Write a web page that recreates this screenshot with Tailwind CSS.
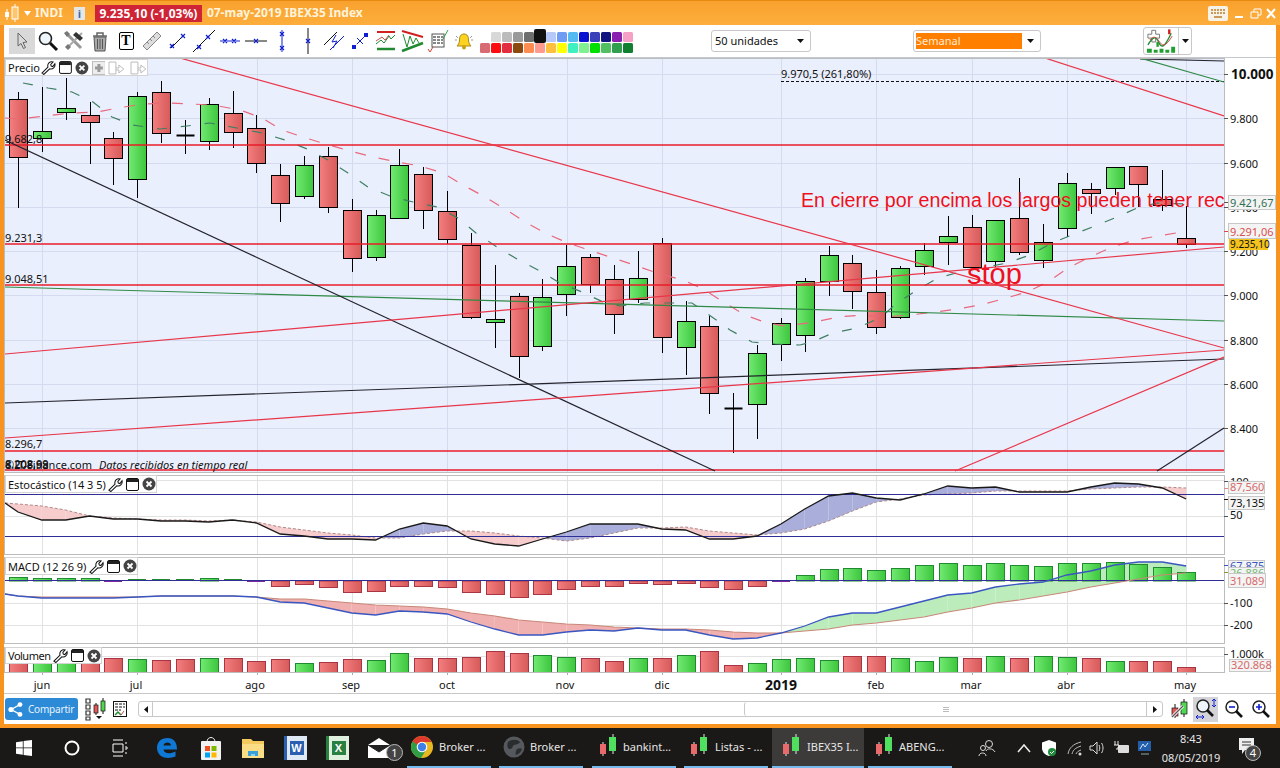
<!DOCTYPE html>
<html lang="es">
<head>
<meta charset="UTF-8" />
<title>IBEX35 Index</title>
<script src="https://cdn.jsdelivr.net/npm/@tailwindcss/browser@4"></script>
</head>
<body class="bg-black">
<div class="w-[1280px] h-[768px] flex flex-col overflow-hidden font-['Noto_Sans',sans-serif]">

  <!-- trading window -->
  <div class="h-[728px] flex flex-col bg-white border-x-4 border-b-4 border-[#f7931e]">

    <!-- title bar -->
    <div class="h-[25px] -mx-1 flex items-center bg-gradient-to-b from-[#f9a12e] to-[#fdae3c] border-t border-[#e88a10] text-[12px] font-bold">
      <svg class="ml-1 w-[17px] h-[20px]" viewBox="0 0 17 20"><path d="M3 6v11M11 1v18" stroke="#fff" fill="none"/><rect x="1" y="9" width="4" height="5" fill="#fff"/><rect x="8" y="4" width="6" height="12" fill="#ffc56e" stroke="#fff"/></svg>
      <svg class="ml-[3px] w-[7px] h-[5px]" viewBox="0 0 7 5"><path d="M0 0h7L3.5 5z" fill="#fff"/></svg>
      <span class="ml-[4px] text-[#fff3dc]">INDI</span>
      <span class="ml-[11px] w-[11px] h-[13px] bg-[#e6e6e6] text-[#3b6db0] text-[11px] leading-[13px] text-center">i</span>
      <span class="ml-[10px] w-[107px] h-[17px] leading-[17px] text-center bg-[#cf2436] text-[#fff]">9.235,10 (-1,03%)</span>
      <span class="ml-[5px] text-[#fff3dc] whitespace-nowrap">07-may-2019 IBEX35 Index</span>
      <div class="ml-auto flex items-center">
        <svg class="w-[20px] h-[15px]" viewBox="0 0 20 15"><rect width="20" height="15" rx="2" fill="#f7f2e8"/><path d="M3 4h14M3 7h14" stroke="#c99a5a" stroke-width="2" stroke-dasharray="2 1"/><path d="M6 11h8" stroke="#c99a5a" stroke-width="2"/></svg>
        <svg class="ml-[6px] w-[42px] h-[15px]" viewBox="0 0 42 15"><path d="M1 11h8" stroke="#fff" stroke-width="2"/><path d="M17 6h7v6h-7zM20 6V3h7v6h-3" stroke="#fff" fill="none"/><path d="M33 3l8 9M41 3l-8 9" stroke="#fff" stroke-width="2"/></svg>
        <span class="w-[4px]"></span>
      </div>
    </div>

    <!-- drawing toolbar -->
    <div class="h-[33px] flex items-center pl-[5px] border-b border-[#c4c8d0]">
      <span class="w-[26px] h-[26px] flex items-center justify-center bg-[#d9d9d9]"><svg class="w-[20px] h-[20px]" viewBox="0 0 20 20"><path d="M6 2l9 9-4 .5 2.5 5-2 1-2.5-5L6 15z" fill="#d9d9d9" stroke="#666"/></svg></span>
      <span class="w-[26px] h-[26px] flex items-center justify-center"><svg class="w-[22px] h-[22px]" viewBox="0 0 22 22"><circle cx="8.5" cy="8.5" r="6" fill="#eef5fb" stroke="#222" stroke-width="1.6"/><path d="M13 13l7 7" stroke="#111" stroke-width="3"/></svg></span>
      <span class="w-[26px] h-[26px] flex items-center justify-center"><svg class="w-[22px] h-[22px]" viewBox="0 0 22 22"><path d="M3 3l15 15" stroke="#999" stroke-width="3"/><path d="M19 3l-13 13" stroke="#aaa" stroke-width="2"/><path d="M13 2l7 6-3 3-7-6z" fill="#333"/><path d="M2 17l3 3 3-3-3-3z" fill="#777"/><path d="M1 3l3-2 3 3-3 3z" fill="#777"/></svg></span>
      <span class="w-[26px] h-[26px] flex items-center justify-center"><svg class="w-[18px] h-[21px]" viewBox="0 0 18 21"><path d="M2 5h14M6 5V2h6v3" stroke="#666" stroke-width="1.5" fill="none"/><path d="M3 6h12l-1 14H4z" fill="#aaa" stroke="#555"/><path d="M6.5 8v10M9 8v10M11.5 8v10" stroke="#555"/></svg></span>
      <span class="w-[26px] h-[26px] flex items-center justify-center"><span class="w-[15px] h-[18px] border border-black rounded-[2px] bg-white text-black text-[14px] leading-[15px] font-bold text-center font-['Liberation_Serif',serif]">T</span></span>
      <span class="w-[26px] h-[26px] flex items-center justify-center"><svg class="w-[22px] h-[22px]" viewBox="0 0 22 22"><path d="M2 16L16 2l4 4L6 20z" fill="#ddd" stroke="#888"/><path d="M6 12l2 2M9 9l2 2M12 6l2 2" stroke="#888"/></svg></span>
      <span class="w-[26px] h-[26px] flex items-center justify-center"><svg class="w-[20px] h-[20px]" viewBox="0 0 20 20"><path d="M3 17L17 3" stroke="#111"/><path d="M2 13l4 4M2 17l4-4M13 3l4 4M13 7l4-4" stroke="#1020d0" stroke-width="1.2"/></svg></span>
      <span class="w-[26px] h-[26px] flex items-center justify-center"><svg class="w-[24px] h-[24px]" viewBox="0 0 24 24"><path d="M1 23L23 1" stroke="#111"/><path d="M5 16l4 4M5 20l4-4M14 6l4 4M14 10l4-4" stroke="#1020d0" stroke-width="1.2"/></svg></span>
      <span class="w-[26px] h-[26px] flex items-center justify-center"><svg class="w-[20px] h-[10px]" viewBox="0 0 20 10"><path d="M0 5h20" stroke="#1020d0"/><path d="M3 3l4 4M3 7l4-4M12 3l4 4M12 7l4-4" stroke="#1020d0" stroke-width="1.2"/></svg></span>
      <span class="w-[26px] h-[26px] flex items-center justify-center"><svg class="w-[22px] h-[10px]" viewBox="0 0 22 10"><path d="M0 5h22" stroke="#111"/><path d="M9 3l4 4M9 7l4-4" stroke="#1020d0" stroke-width="1.2"/></svg></span>
      <span class="w-[26px] h-[26px] flex items-center justify-center"><svg class="w-[10px] h-[22px]" viewBox="0 0 10 22"><path d="M5 0v22" stroke="#1020d0"/><path d="M3 2l4 4M3 6l4-4M3 16l4 4M3 20l4-4" stroke="#1020d0" stroke-width="1.2"/></svg></span>
      <span class="w-[26px] h-[26px] flex items-center justify-center"><svg class="w-[10px] h-[26px]" viewBox="0 0 10 26"><path d="M5 0v26" stroke="#111"/><path d="M3 11l4 4M3 15l4-4" stroke="#1020d0" stroke-width="1.2"/></svg></span>
      <span class="w-[26px] h-[26px] flex items-center justify-center"><svg class="w-[22px] h-[22px]" viewBox="0 0 22 22"><path d="M1 15L14 2" stroke="#111"/><path d="M7 20L21 6" stroke="#1020d0"/><path d="M13 5l-4 7 5-1-4 7" stroke="#1020d0" fill="none"/></svg></span>
      <span class="w-[26px] h-[26px] flex items-center justify-center"><svg class="w-[20px] h-[20px]" viewBox="0 0 20 20"><path d="M4 16L16 4" stroke="#1020d0" stroke-dasharray="2 2"/><rect x="2" y="14" width="4" height="4" fill="#1020d0"/><rect x="14" y="2" width="4" height="4" fill="#1020d0"/><path d="M7 7l6 6M7 13l6-6" stroke="#1020d0"/></svg></span>
      <span class="w-[26px] h-[26px] flex items-center justify-center"><svg class="w-[24px] h-[24px]" viewBox="0 0 24 24"><path d="M3 3h18" stroke="#d02020" stroke-width="2"/><path d="M3 20h18" stroke="#208a30" stroke-width="2.5"/><path d="M2 15l5-4 3 3 5-7 2 3 4-4" stroke="#208a30" fill="none"/><path d="M2 12l6-4 3 3 4-5" stroke="#d05050" fill="none"/></svg></span>
      <span class="w-[26px] h-[26px] flex items-center justify-center"><svg class="w-[25px] h-[25px]" viewBox="0 0 25 25"><path d="M2 2l21 6" stroke="#d02020" stroke-width="2"/><path d="M2 22l21-8" stroke="#208a30" stroke-width="2.5"/><path d="M3 5l4 13 3-11 3 8 3-6 3 5" stroke="#208a30" fill="none"/></svg></span>
      <span class="w-[26px] h-[26px] flex items-center justify-center"><svg class="w-[22px] h-[24px]" viewBox="0 0 22 24"><rect x="5" y="5" width="12" height="13" fill="#fff" stroke="#555"/><path d="M6 8h10M6 11h10M6 14h10" stroke="#111" stroke-dasharray="3 1"/><path d="M1 20l2 3 3-5" stroke="#d04030" fill="none"/><path d="M16 10l5-9" stroke="#30a040"/></svg></span>
      <span class="w-[26px] h-[26px] flex items-center justify-center"><svg class="w-[20px] h-[20px]" viewBox="0 0 20 20"><path d="M10 3c-3.500 0-4.500 3-4.500 6S4 14 3 15h14c-1-1-2.500-3-2.500-6s-1-6-4.500-6z" fill="#ffd21f" stroke="#a88a10"/><circle cx="10" cy="16.500" r="2" fill="#c9a010"/><path d="M2 5l2 2M18 5l-2 2M1 9h2M19 9h-2" stroke="#999"/></svg></span>

      <svg class="ml-[3px] w-[154px] h-[25px]" viewBox="0 0 154 25">
        <g transform="translate(11 3)">
          <rect width="10" height="10" rx="1.500" fill="#d8d8d8"/><rect x="11" width="10" height="10" rx="1.500" fill="#bcbcbc"/><rect x="22" width="10" height="10" rx="1.500" fill="#9a9a9a"/><rect x="33" width="10" height="10" rx="1.500" fill="#6e6e6e"/>
          <rect x="55" width="10" height="10" rx="1.500" fill="#b5c8f7"/><rect x="66" width="10" height="10" rx="1.500" fill="#6f9cf3"/><rect x="77" width="10" height="10" rx="1.500" fill="#56baf2"/><rect x="88" width="10" height="10" rx="1.500" fill="#0a14d0"/><rect x="99" width="10" height="10" rx="1.500" fill="#3a40b8"/><rect x="110" width="10" height="10" rx="1.500" fill="#101480"/><rect x="121" width="10" height="10" rx="1.500" fill="#8a20b0"/><rect x="132" width="10" height="10" rx="1.500" fill="#f6a0c8"/>
        </g>
        <g transform="translate(0 14)">
          <rect width="10" height="10" rx="1.500" fill="#d86a72"/><rect x="11" width="10" height="10" rx="1.500" fill="#ff0c10"/><rect x="22" width="10" height="10" rx="1.500" fill="#e03040"/><rect x="33" width="10" height="10" rx="1.500" fill="#8a4a10"/><rect x="44" width="10" height="10" rx="1.500" fill="#ff8c50"/><rect x="55" width="10" height="10" rx="1.500" fill="#ff9a90"/><rect x="66" width="10" height="10" rx="1.500" fill="#ffc040"/><rect x="77" width="10" height="10" rx="1.500" fill="#ffff00"/><rect x="88" width="10" height="10" rx="1.500" fill="#40f0c0"/><rect x="99" width="10" height="10" rx="1.500" fill="#80f090"/><rect x="110" width="10" height="10" rx="1.500" fill="#00e000"/><rect x="121" width="10" height="10" rx="1.500" fill="#50c060"/><rect x="132" width="10" height="10" rx="1.500" fill="#30a050"/><rect x="143" width="10" height="10" rx="1.500" fill="#108030"/>
        </g>
        <rect x="54" y="0" width="12" height="14" rx="2" fill="#111"/>
      </svg>

      <div class="ml-[77px] w-[100px] h-[22px] flex items-center justify-between pl-[3px] pr-[6px] border border-[#c8c8c8] rounded-[3px] text-[11px] text-[#111]">
        <span>50 unidades</span>
        <svg class="w-[7px] h-[4px]" viewBox="0 0 7 4"><path d="M0 0h7L3.500 4z" fill="#111"/></svg>
      </div>
      <div class="ml-[102px] w-[128px] h-[22px] flex items-center justify-between pl-[2px] pr-[6px] border border-[#c8c8c8] rounded-[3px] text-[11px]">
        <span class="w-[106px] h-[16px] leading-[16px] bg-[#ff7f00] text-[#ffe9d0]">Semanal</span>
        <svg class="w-[7px] h-[4px]" viewBox="0 0 7 4"><path d="M0 0h7L3.500 4z" fill="#111"/></svg>
      </div>
      <div class="ml-[102px] w-[49px] h-[28px] flex items-center border border-[#c8c8c8] rounded-[3px]">
        <svg class="ml-[1px] w-[34px] h-[26px] border-r border-[#d0d0d0]" viewBox="0 0 34 26"><path d="M3 6h4V2h4v4h4v4h-4v4H7v-4H3z" fill="#fff" stroke="#777"/><path d="M3 17c5-8 8-10 11-3s6 6 13-9" stroke="#208a30" stroke-width="1.400" fill="none"/><path d="M5 12c7-9 10 6 14 5s5-3 9-9" stroke="#d04040" fill="none"/><path d="M25 1v5" stroke="#d02020" stroke-width="2.500"/><path d="M13 14v5" stroke="#20a030" stroke-width="2.500"/><path d="M2 25v-4h5v4zM9 25v-3h4v3zM15 25v-4h4v4zM21 25v-3h4v3zM27 25v-6h4v6z" fill="#20a030"/></svg>
        <svg class="ml-[3px] w-[7px] h-[4px]" viewBox="0 0 7 4"><path d="M0 0h7L3.500 4z" fill="#111"/></svg>
      </div>
    </div>

    <!-- price pane -->
    <div class="relative h-[417px]">
      <svg id="pricePane" class="block overflow-visible" width="1272" height="417" viewBox="4 58 1272 417"></svg>
      <div class="absolute left-px top-px h-[17px] w-[143px] flex items-center gap-[3px] pl-[2px] bg-white border border-[#d4d4d4] text-[11px] leading-none text-[#111]">
        <span class="w-[30px]">Precio</span>
        <svg class="w-[15px] h-[15px]" viewBox="0 0 16 16"><path d="M1 14l6.500-6.500C6.500 4 9.500 1 13 2l-2.500 2.800.5 1.700 1.700.5L15 4c.8 3.800-2.400 6.400-5.600 5.400L3 15.500z" fill="#fff" stroke="#111" stroke-width="1.100"/></svg>
        <svg class="w-[13px] h-[13px]" viewBox="0 0 13 13"><rect x=".5" y=".5" width="12" height="12" rx="1.500" fill="#fff" stroke="#111"/><rect x="1" y="1" width="11" height="3" fill="#222"/></svg>
        <svg class="w-[14px] h-[14px]" viewBox="0 0 14 14"><circle cx="7" cy="7" r="6.500" fill="#444"/><path d="M4.500 4.500l5 5M9.500 4.500l-5 5" stroke="#fff" stroke-width="1.800"/></svg>
        <svg class="w-[14px] h-[14px]" viewBox="0 0 14 14"><rect x=".5" y=".5" width="13" height="13" fill="#eee" stroke="#bbb"/><path d="M7 3v8M3 7h8" stroke="#999" stroke-width="3"/></svg>
        <svg class="w-[17px] h-[14px]" viewBox="0 0 17 14"><path d="M1 1h7v12H1zM8 7h3V4l5 4-5 4v-3H8" fill="#fff" stroke="#bbb"/></svg>
        <svg class="ml-[2px] w-[17px] h-[14px]" viewBox="0 0 17 14"><path d="M1 1h7v12H1zM8 7h3V4l5 4-5 4v-3H8" fill="#fff" stroke="#bbb"/></svg>
      </div>
    </div>

    <!-- stochastic pane -->
    <div class="relative h-[82px]">
      <svg id="stochPane" class="block overflow-visible" width="1272" height="82" viewBox="4 475 1272 82"></svg>
      <div class="absolute left-px top-0 h-[18px] w-[152px] flex items-center gap-[3px] pl-[2px] bg-white border border-[#d4d4d4] text-[11px] leading-none text-[#111]">
        <span class="w-[97px] whitespace-nowrap">Estocástico (14 3 5)</span>
        <svg class="w-[15px] h-[15px]" viewBox="0 0 16 16"><path d="M1 14l6.500-6.500C6.500 4 9.500 1 13 2l-2.500 2.800.5 1.700 1.700.5L15 4c.8 3.800-2.400 6.400-5.600 5.400L3 15.500z" fill="#fff" stroke="#111" stroke-width="1.100"/></svg>
        <svg class="w-[13px] h-[13px]" viewBox="0 0 13 13"><rect x=".5" y=".5" width="12" height="12" rx="1.500" fill="#fff" stroke="#111"/><rect x="1" y="1" width="11" height="3" fill="#222"/></svg>
        <svg class="w-[14px] h-[14px]" viewBox="0 0 14 14"><circle cx="7" cy="7" r="6.500" fill="#444"/><path d="M4.500 4.500l5 5M9.500 4.500l-5 5" stroke="#fff" stroke-width="1.800"/></svg>
      </div>
    </div>

    <!-- macd pane -->
    <div class="relative h-[90px]">
      <svg id="macdPane" class="block overflow-visible" width="1272" height="90" viewBox="4 557 1272 90"></svg>
      <div class="absolute left-px top-0 h-[18px] w-[133px] flex items-center gap-[3px] pl-[2px] bg-white border border-[#d4d4d4] text-[11px] leading-none text-[#111]">
        <span class="w-[78px] whitespace-nowrap">MACD (12 26 9)</span>
        <svg class="w-[15px] h-[15px]" viewBox="0 0 16 16"><path d="M1 14l6.500-6.500C6.500 4 9.500 1 13 2l-2.500 2.800.5 1.700 1.700.5L15 4c.8 3.800-2.400 6.400-5.600 5.400L3 15.500z" fill="#fff" stroke="#111" stroke-width="1.100"/></svg>
        <svg class="w-[13px] h-[13px]" viewBox="0 0 13 13"><rect x=".5" y=".5" width="12" height="12" rx="1.500" fill="#fff" stroke="#111"/><rect x="1" y="1" width="11" height="3" fill="#222"/></svg>
        <svg class="w-[14px] h-[14px]" viewBox="0 0 14 14"><circle cx="7" cy="7" r="6.500" fill="#444"/><path d="M4.500 4.500l5 5M9.500 4.500l-5 5" stroke="#fff" stroke-width="1.800"/></svg>
      </div>
    </div>

    <!-- volume pane -->
    <div class="relative h-[25px]">
      <svg id="volPane" class="block overflow-visible" width="1272" height="25" viewBox="4 647 1272 25"></svg>
      <div class="absolute left-px top-0 h-[17px] w-[97px] flex items-center gap-[3px] pl-[2px] bg-white border border-[#d4d4d4] text-[11px] leading-none text-[#111]">
        <span class="w-[42px] whitespace-nowrap tracking-[-0.5px]">Volumen</span>
        <svg class="w-[15px] h-[15px]" viewBox="0 0 16 16"><path d="M1 14l6.500-6.500C6.500 4 9.500 1 13 2l-2.500 2.800.5 1.700 1.700.5L15 4c.8 3.800-2.400 6.400-5.600 5.400L3 15.500z" fill="#fff" stroke="#111" stroke-width="1.100"/></svg>
        <svg class="w-[13px] h-[13px]" viewBox="0 0 13 13"><rect x=".5" y=".5" width="12" height="12" rx="1.500" fill="#fff" stroke="#111"/><rect x="1" y="1" width="11" height="3" fill="#222"/></svg>
        <svg class="w-[14px] h-[14px]" viewBox="0 0 14 14"><circle cx="7" cy="7" r="6.500" fill="#444"/><path d="M4.500 4.500l5 5M9.500 4.500l-5 5" stroke="#fff" stroke-width="1.800"/></svg>
      </div>
    </div>

    <!-- months -->
    <div class="h-[22px] shrink-0 border-b border-[#c8c8c8]">
      <svg id="datePane" class="block" width="1272" height="21" viewBox="4 672 1272 21"></svg>
    </div>

    <!-- bottom toolbar -->
    <div class="flex-1 flex items-center pl-px">
      <button class="w-[73px] h-[22px] flex items-center gap-[5px] pl-[3px] rounded-[3px] bg-[#2c8ad6] text-[10px] tracking-[-0.2px] text-[#e8f4ff] whitespace-nowrap">
        <svg class="w-[15px] h-[15px] shrink-0" viewBox="0 0 15 15"><circle cx="3" cy="7.500" r="2.600" fill="#fff"/><circle cx="12" cy="2.600" r="2.400" fill="#fff"/><circle cx="12" cy="12.400" r="2.400" fill="#fff"/><path d="M3 7.500L12 2.600M3 7.500l9 4.900" stroke="#fff" stroke-width="1.300"/></svg>
        Compartir
      </button>
      <svg class="ml-[5px] w-[24px] h-[24px]" viewBox="0 0 24 24"><path d="M3 2h4v4H3zM3 8h4v4H3zM3 14h4v4H3zM3 20h4v3H3z" fill="none" stroke="#333" stroke-width="1.200"/><path d="M13 6v12" stroke="#111"/><rect x="11" y="8" width="4" height="8" fill="#e05a5a" stroke="#111" stroke-width=".7"/><path d="M20 1v16" stroke="#111"/><rect x="18" y="4" width="4" height="10" fill="#4fd84f" stroke="#111" stroke-width=".7"/><path d="M13 19h6l-3 3z" fill="#111"/></svg>
      <svg class="ml-[6px] w-[14px] h-[16px]" viewBox="0 0 14 16"><rect x=".5" y=".5" width="13" height="15" fill="#fff" stroke="#111"/><path d="M2 3h10M2 6h10M2 9h6" stroke="#111" stroke-dasharray="3 1"/><path d="M2 14l3-3 3 3" stroke="#208a30" fill="none" stroke-width="1.500"/><path d="M8 14l3-4" stroke="#d04040"/></svg>
      <div class="ml-[11px] w-[1025px] h-[16px] flex border border-[#c8c8c8] rounded-[3px]">
        <span class="w-[14px] flex items-center justify-center border-r border-[#c8c8c8]"><svg class="w-[4px] h-[7px]" viewBox="0 0 4 7"><path d="M4 0v7L0 3.500z" fill="#111"/></svg></span>
        <span class="w-[591px]"></span>
        <span class="flex-1 flex items-center justify-center border-l border-r border-[#c8c8c8] rounded-l-[3px]"><svg class="w-[6px] h-[5px]" viewBox="0 0 6 5"><path d="M0 .5h6M0 2.500h6M0 4.500h6" stroke="#bbb"/></svg></span>
        <span class="w-[15px] flex items-center justify-center"><svg class="w-[4px] h-[7px]" viewBox="0 0 4 7"><path d="M0 0v7l4-3.500z" fill="#111"/></svg></span>
      </div>
      <svg class="ml-[6px] w-[20px] h-[22px]" viewBox="0 0 20 22"><path d="M6 6v14M15 1v18" stroke="#111"/><rect x="3" y="10" width="6" height="8" fill="#e05a5a" stroke="#111" stroke-width=".7"/><rect x="12" y="4" width="6" height="12" fill="#4fd84f" stroke="#111" stroke-width=".7"/><path d="M3 19l11-11" stroke="#fff" stroke-width="3"/><path d="M3 19l11-11" stroke="#555" stroke-width="1.200"/></svg>
      <span class="ml-[4px] w-[25px] h-[25px] flex items-center justify-center bg-[#d4d4d8]"><svg class="w-[24px] h-[24px]" viewBox="0 0 24 24"><circle cx="9" cy="9" r="6" fill="#eef5fb" stroke="#222" stroke-width="1.500"/><path d="M13 13l6 6" stroke="#111" stroke-width="2.600"/><path d="M20 2v8M18 4l2-2 2 2M18 8l2 2 2-2" stroke="#1020d0" fill="none"/><path d="M2 20h8M4 18l-2 2 2 2M8 18l2 2-2 2" stroke="#1020d0" fill="none"/></svg></span>
      <svg class="ml-[6px] w-[20px] h-[20px]" viewBox="0 0 20 20"><circle cx="8" cy="8" r="6" fill="#fff" stroke="#222" stroke-width="1.500"/><path d="M5 8h6" stroke="#1020d0" stroke-width="1.600"/><path d="M12 12l6 6" stroke="#111" stroke-width="2.600"/></svg>
      <svg class="ml-[7px] w-[20px] h-[20px]" viewBox="0 0 20 20"><circle cx="8" cy="8" r="6" fill="#fff" stroke="#222" stroke-width="1.500"/><path d="M5 8h6M8 5v6" stroke="#1020d0" stroke-width="1.600"/><path d="M12 12l6 6" stroke="#111" stroke-width="2.600"/></svg>
    </div>
  </div>

  <!-- windows taskbar -->
  <div class="h-[40px] flex items-center bg-[#1b1917] text-[11px] text-[#e6e6e6] whitespace-nowrap">
    <span class="w-[48px] flex justify-center"><svg class="w-[16px] h-[16px]" viewBox="0 0 16 16"><path d="M0 2.200l6.800-1V7.500H0zM7.600 1L16 0v7.500H7.600zM0 8.300h6.800v6.500L0 13.800zM7.600 8.300H16V16l-8.400-1.100z" fill="#fff"/></svg></span>
    <span class="w-[48px] flex justify-center"><svg class="w-[16px] h-[16px]" viewBox="0 0 16 16"><circle cx="8" cy="8" r="6.500" fill="none" stroke="#fff" stroke-width="2"/></svg></span>
    <span class="w-[48px] flex justify-center"><svg class="w-[16px] h-[18px]" viewBox="0 0 16 18"><path d="M1 1h10M1 17h10M1 5h10v8H1z" fill="none" stroke="#fff"/><path d="M13 4h2M13 8h2v2h-2M13 14h2" stroke="#fff"/></svg></span>
    <span class="w-[46px] flex justify-center"><svg class="w-[24px] h-[24px]" viewBox="0 0 24 24"><path d="M2 12C2 6 6 2 12.500 2 18.500 2 22 6 22 13.500H8.500c.3 4 6 5 12 2v5c-7 3-18 2-18.500-8.500zM8.500 9.500h7.500c0-4-7-4-7.500 0z" fill="#0f78d4"/></svg></span>
    <span class="w-[42px] flex justify-center"><svg class="w-[24px] h-[26px]" viewBox="0 0 24 26"><path d="M8 7c0-6 8-6 8 0" stroke="#eee" fill="none"/><rect x="2" y="6" width="20" height="19" rx="1" fill="#f2f2f2"/><path d="M6 11h5v5H6z" fill="#f25022"/><path d="M12.500 11h5v5h-5z" fill="#7fba00"/><path d="M6 17.500h5v5H6z" fill="#00a4ef"/><path d="M12.500 17.500h5v5h-5z" fill="#ffb900"/></svg></span>
    <span class="w-[42px] flex justify-center"><svg class="w-[24px] h-[22px]" viewBox="0 0 24 22"><path d="M1 2h9l2 2h11v17H1z" fill="#f4c95d"/><path d="M1 7h22v14H1z" fill="#fbdd86"/><path d="M7 14h10v5H7z" fill="#3aa0d8"/><path d="M10 17h4v2h-4z" fill="#8fd0ef"/></svg></span>
    <span class="w-[42px] flex justify-center"><span class="w-[23px] h-[24px] flex items-center justify-center bg-[#dfe8f5] border-l-[3px] border-[#2b5fb0]"><span class="w-[14px] h-[14px] bg-[#2b5fb0] text-white text-[11px] leading-[14px] font-bold text-center font-['Liberation_Sans']">W</span></span></span>
    <span class="w-[42px] flex justify-center"><span class="w-[23px] h-[24px] flex items-center justify-center bg-[#dff0df] border-l-[3px] border-[#2a8040]"><span class="w-[14px] h-[14px] bg-[#2a8040] text-white text-[11px] leading-[14px] font-bold text-center font-['Liberation_Sans']">X</span></span></span>
    <span class="relative w-[42px] flex justify-center"><svg class="w-[24px] h-[20px]" viewBox="0 0 24 20"><path d="M1 7L12 0l11 7v13H1z" fill="#fff"/><path d="M1 7l11 7 11-7" fill="#222" stroke="#222"/></svg><span class="absolute left-[28px] top-[6px] w-[17px] h-[17px] rounded-full border border-[#bbb] bg-[#444] text-[11px] leading-[15px] text-center text-white">1</span></span>

    <div class="ml-[7px] flex">
      <div class="relative h-[40px] w-[84px] mr-[8px] flex items-center border-b-2 border-[#76b9ed]"><svg class="ml-[3px] w-[24px] h-[24px] shrink-0" viewBox="0 0 24 24"><circle cx="12" cy="12" r="11" fill="#e9b820"/><path d="M12 1a11 11 0 0 0-9.500 5.500L8 15l4-8h9.500A11 11 0 0 0 12 1z" fill="#db3a2c"/><path d="M2.500 6.500A11 11 0 0 0 11 23l5-8z" fill="#2f9e44"/><circle cx="12" cy="12" r="5.300" fill="#fff"/><circle cx="12" cy="12" r="4.200" fill="#3f7fe8"/></svg><span class="ml-[5px]">Broker ...</span></div>
      <div class="relative h-[40px] w-[84px] mr-[9px] flex items-center border-b-2 border-[#76b9ed]"><svg class="ml-[3px] w-[24px] h-[24px] shrink-0" viewBox="0 0 24 24"><circle cx="12" cy="12" r="10.500" fill="#55585c"/><path d="M6 7c4-3 9-3 12 0-2 3-4 2-6 3s-1 4-4 4-3-4-2-7zM15 14c2-1 4-1 5 0-1 3-3 5-6 6-1-2 0-4 1-6z" fill="#2a2c2e"/></svg><span class="ml-[4px]">Broker ...</span></div>
      <div class="relative h-[40px] w-[84px] mr-[8px] flex items-center border-b-2 border-[#76b9ed]"><svg class="ml-[6px] w-[20px] h-[26px] shrink-0" viewBox="0 0 20 26"><path d="M5 8v14M15 0v20" stroke="#e8e8e8" stroke-width="1"/><rect x="2" y="10" width="6" height="10" fill="#e96a6a"/><rect x="11" y="3" width="7" height="14" fill="#4fe05f"/></svg><span class="ml-[5px]">bankint...</span></div>
      <div class="relative h-[40px] w-[84px] mr-[4px] flex items-center border-b-2 border-[#76b9ed]"><svg class="ml-[5px] w-[20px] h-[26px] shrink-0" viewBox="0 0 20 26"><path d="M5 8v14M15 0v20" stroke="#e8e8e8" stroke-width="1"/><rect x="2" y="10" width="6" height="10" fill="#e96a6a"/><rect x="11" y="3" width="7" height="14" fill="#4fe05f"/></svg><span class="ml-[6px]">Listas - ...</span></div>
      <div class="relative h-[40px] w-[92px] mr-[4px] flex items-center bg-[#3c3b3a] border-b-2 border-[#76b9ed]"><svg class="ml-[9px] w-[20px] h-[26px] shrink-0" viewBox="0 0 20 26"><path d="M5 8v14M15 0v20" stroke="#e8e8e8" stroke-width="1"/><rect x="2" y="10" width="6" height="10" fill="#e96a6a"/><rect x="11" y="3" width="7" height="14" fill="#4fe05f"/></svg><span class="ml-[6px]">IBEX35 I...</span></div>
      <div class="relative h-[40px] w-[84px] flex items-center border-b-2 border-[#76b9ed]"><svg class="ml-[6px] w-[20px] h-[26px] shrink-0" viewBox="0 0 20 26"><path d="M5 8v14M15 0v20" stroke="#e8e8e8" stroke-width="1"/><rect x="2" y="10" width="6" height="10" fill="#e96a6a"/><rect x="11" y="3" width="7" height="14" fill="#4fe05f"/></svg><span class="ml-[5px]">ABENG...</span></div>
    </div>

    <svg class="ml-[26px] w-[18px] h-[18px]" viewBox="0 0 18 18"><circle cx="11" cy="5" r="3.500" fill="none" stroke="#ddd"/><circle cx="5" cy="9" r="2.500" fill="none" stroke="#ddd"/><path d="M1 17c0-4 7-4 7 0M8 12c1-3 7-3 9 1" fill="none" stroke="#ddd"/></svg>
    <svg class="ml-[20px] w-[16px] h-[10px]" viewBox="0 0 16 10"><path d="M2 9l6-7 6 7" fill="none" stroke="#eee" stroke-width="1.500"/></svg>
    <svg class="ml-[9px] w-[16px] h-[18px]" viewBox="0 0 16 18"><path d="M8 1l7 2.500V9c0 4-3 7-7 8-4-1-7-4-7-8V3.500z" fill="#fff"/><circle cx="11" cy="13" r="4" fill="#1f8a3b"/><path d="M9 13l1.500 1.500L13 12" stroke="#fff" fill="none"/></svg>
    <svg class="ml-[10px] w-[16px] h-[16px]" viewBox="0 0 16 16"><path d="M1 14c1-6 5-10 13-12M5 14c1-4 3-6 9-8M9 14c1-2 2-3 5-4" fill="none" stroke="#bbb"/><circle cx="13" cy="14" r="1.500" fill="#ddd"/></svg>
    <svg class="ml-[6px] w-[16px] h-[16px]" viewBox="0 0 16 16"><path d="M1 6h3l4-4v12l-4-4H1z" fill="none" stroke="#ddd"/><path d="M10 5c1 2 1 4 0 6M12.500 3c2 3 2 7 0 10" fill="none" stroke="#ddd"/></svg>
    <svg class="ml-[9px] w-[16px] h-[14px]" viewBox="0 0 16 14"><rect x="4" y="4" width="11" height="8" fill="#ddd" rx="1"/><path d="M1 0v4M4 0v4M0 4h5v3H3v2" stroke="#eee" fill="none"/></svg>
    <svg class="ml-[7px] w-[16px] h-[16px]" viewBox="0 0 16 16"><rect x="1" y="1" width="13" height="10" fill="#245ea8"/><path d="M3 9l3-5 2 3 3-4" stroke="#cfe6ff" fill="none"/><path d="M4 14h8" stroke="#8aa"/></svg>
    <div class="ml-[6px] w-[64px] flex flex-col items-center leading-[19px]">
      <span>8:43</span>
      <span>08/05/2019</span>
    </div>
    <span class="relative ml-[15px] w-[20px] h-[22px]"><svg class="w-[17px] h-[18px]" viewBox="0 0 17 18"><path d="M1 1h15v12H7l-3 4v-4H1z" fill="#eee"/><path d="M4 5h9M4 8h9" stroke="#333"/></svg><span class="absolute left-[7px] top-[8px] w-[16px] h-[16px] rounded-full bg-[#444] border border-[#bbb] text-[11px] leading-[14px] text-center text-white">4</span></span>
  </div>
</div>

<script>
// everything below uses screen coordinates, each pane's viewBox lines up with them
const xAt = i => 18 + 23.84 * i;
const months = [42, 137, 257, 352, 447, 567, 662, 781, 876, 972, 1067, 1186];
const L = 5, R = 1224;

const line = (x1, y1, x2, y2, c, w = 1, extra = "") =>
  `<line x1="${x1}" y1="${y1}" x2="${x2}" y2="${y2}" stroke="${c}" stroke-width="${w}" ${extra}/>`;
const poly = (pts, c, w = 1, extra = "") =>
  `<polyline points="${pts.map(p => p.join(",")).join(" ")}" fill="none" stroke="${c}" stroke-width="${w}" ${extra}/>`;
const text = (x, y, s, c = "#111", size = 11, extra = "") =>
  `<text x="${x}" y="${y}" fill="${c}" font-size="${size}" ${extra}>${s}</text>`;
const tag = (x, y, w, h, s, c, bg = "#f4f4f4", border = "#c8c8c8") =>
  `<rect x="${x + .5}" y="${y + .5}" width="${w}" height="${h}" fill="${bg}" stroke="${border}"/>` +
  text(x + 2, y + h - 2, s, c, 11);

function frame(top, bottom, bg, gridYs, gridColor) {
  let s = `<rect x="${L}" y="${top}" width="${R - L}" height="${bottom - top}" fill="${bg}"/>`;
  gridYs.forEach(y => s += line(L, y + .5, R, y + .5, gridColor));
  months.forEach(x => s += line(x + .5, top, x + .5, bottom, gridColor));
  return s;
}
const border = (top, bottom) =>
  `<rect x="${L - .5}" y="${top + .5}" width="${R - L + 1}" height="${bottom - top}" fill="none" stroke="#bcbcbc"/>`;

// [wick top, body top, body bottom, wick bottom, colour]  k = doji
const candles = [
  [92,99,157,208,"r"],[87,131,138,152,"g"],[78,108,112,120,"g"],[102,115,122,164,"r"],[132,138,158,185,"r"],
  [92,96,179,198,"g"],[81,92,133,143,"r"],[120,135,135,154,"k"],[98,104,141,150,"g"],[91,113,132,148,"r"],
  [115,128,163,173,"r"],[164,175,203,222,"r"],[156,165,196,199,"g"],[147,156,207,213,"r"],[199,210,258,272,"r"],
  [210,215,257,261,"g"],[149,165,218,218,"g"],[167,174,210,229,"r"],[191,211,239,244,"r"],[233,245,317,319,"r"],
  [265,319,322,348,"g"],[293,296,356,378,"r"],[279,297,346,351,"g"],[245,266,294,316,"g"],[254,257,284,293,"r"],
  [265,279,314,334,"r"],[251,278,299,303,"g"],[238,243,337,353,"r"],[301,321,347,375,"g"],[316,326,393,414,"r"],
  [393,408,408,453,"k"],[345,353,404,439,"g"],[318,323,344,361,"g"],[278,281,335,352,"g"],[246,255,281,296,"g"],
  [255,263,291,309,"r"],[270,292,327,334,"r"],[266,268,317,319,"g"],[243,250,266,275,"g"],[216,236,242,265,"g"],
  [215,227,267,267,"r"],[220,220,261,267,"g"],[178,218,252,255,"r"],[224,242,260,268,"g"],[173,183,228,237,"g"],
  [183,189,193,214,"r"],[167,167,188,195,"g"],[166,166,184,207,"r"],[170,199,205,211,"r"],[206,238,244,248,"r"]
];

const greenMa = [[23,83],[48,88],[72,92],[93,102],[112,117],[133,125],[160,129],[187,126],[210,123],[237,128],[262,133],[285,140],[307,149],[328,160],[348,173],[368,187],[390,196],[413,202],[437,207],[458,218],[476,233],[497,247],[517,259],[538,270],[560,283],[582,292],[603,302],[620,306],[645,303],[670,303],[692,303],[712,317],[730,330],[752,342],[775,344],[800,345],[812,342],[833,333],[857,328],[880,318],[897,303],[917,290],[938,278],[960,272],[982,268],[1007,263],[1030,255],[1052,243],[1072,235],[1095,226],[1117,217],[1137,208],[1157,203],[1186,204]];
const redMa = [[5,118],[20,119],[45,116],[72,113],[97,112],[118,108],[143,104],[167,103],[190,104],[213,105],[240,110],[262,118],[282,130],[303,137],[322,143],[350,151],[373,157],[397,162],[420,166],[443,173],[463,185],[485,197],[505,209],[525,222],[547,234],[568,243],[592,251],[613,258],[637,266],[660,274],[683,280],[703,289],[725,303],[745,315],[767,323],[785,326],[815,322],[838,317],[862,315],[885,317],[910,315],[935,312],[958,309],[980,305],[1003,299],[1027,292],[1048,282],[1068,268],[1090,257],[1112,247],[1135,240],[1158,236],[1182,232]];

// --- price pane
let s = `<defs>
  <linearGradient id="redBar"><stop offset="0" stop-color="#f47e7e"/><stop offset="1" stop-color="#d65a5a"/></linearGradient>
  <linearGradient id="greenBar"><stop offset="0" stop-color="#72ea72"/><stop offset="1" stop-color="#3dc63d"/></linearGradient>
  <clipPath id="plotClip"><rect x="${L}" y="59" width="${R - L}" height="413"/></clipPath>
</defs>`;
s += frame(58, 472, "#eaeffd", [74, 118, 163, 207, 251, 295, 340, 384, 428], "#d5dbee");
s += `<g clip-path="url(#plotClip)">`;
candles.forEach((c, i) => {
  const x = Math.round(xAt(i)) + .5;
  s += line(x, c[0], x, c[3], "#000");
  if (c[4] === "k") s += line(x - 9, c[1] + .5, x + 9, c[1] + .5, "#000", 2);
  else s += `<rect x="${x - 9}" y="${c[1] + .5}" width="18" height="${c[2] - c[1]}" fill="url(#${c[4] === "r" ? "redBar" : "greenBar"})" stroke="#000"/>`;
});
s += poly(greenMa, "#3f7f62", 1.2, 'stroke-dasharray="10 14"');
s += poly(redMa, "#e8687c", 1.2, 'stroke-dasharray="11 13"');

[145, 244, 285, 451, 470].forEach(y => s += line(L, y, R, y, "#e81c28", 1.4));
s += line(781, 81.5, R, 81.5, "#111", 1, 'stroke-dasharray="3 2"');
s += line(5, 287, R, 321, "#2f8a45", 1.2);
s += line(5, 403, R, 359, "#24242e", 1.2);
s += line(5, 140, 715, 471, "#24242e", 1.2);
s += line(1157, 471, R, 428, "#24242e", 1.2);
s += line(1140, 59, R, 61, "#24242e", 1.2);
s += line(1140, 58, R, 82, "#2f8a45", 1.2);
s += line(180, 58, R, 348, "#e8364a", 1.2);
s += line(5, 354, R, 247, "#e8364a", 1.2);
s += line(5, 438, R, 350, "#e8364a", 1.2);
s += line(955, 471, R, 357, "#e8364a", 1.2);
s += line(1045, 58, R, 116, "#e8364a", 1.2);
s += `<g font-family="Liberation Sans, sans-serif" fill="#ee1020"><text x="801" y="207" font-size="19.6">En cierre por encima los largos pueden tener rec</text><text x="967" y="284" font-size="29">stop</text></g>`;
s += `</g>`;
s += text(5, 143, "9.682,8");
s += text(5, 242, "9.231,3");
s += text(5, 283, "9.048,51");
s += text(5, 448, "8.296,7");
s += text(5, 468, "8.208,99") + text(5, 469, "8.208,98");
s += text(5, 469, "©IT-Finance.com");
s += text(99, 469, "Datos recibidos en tiempo real", "#111", 11, 'font-style="italic"');
s += text(781, 78, "9.970,5 (261,80%)");
s += border(58, 472);
[[118,"9.800"],[163,"9.600"],[207,"9.400"],[251,"9.200"],[295,"9.000"],[340,"8.800"],[384,"8.600"],[428,"8.400"]].forEach(([y, v]) => {
  s += line(R, y + .5, R + 4, y + .5, "#555");
  s += text(1230, y + 5, v, "#111", 11);
});
s += line(R, 74.5, R + 4, 74.5, "#555");
s += text(1231, 79, "10.000", "#111", 13.5, 'font-weight="700"');
s += line(R, 202.5, R + 4, 202.5, "#555") + tag(1228, 195, 47, 14, "9.421,67", "#2f6f55");
s += line(R, 231.5, R + 4, 231.5, "#d44") + tag(1228, 223, 47, 15, "9.291,06", "#d9504f");
s += `<rect x="1229" y="239" width="39" height="11" fill="#f5c41c"/>` + text(1230, 248, "9.235,10", "#111", 10);
document.getElementById("pricePane").innerHTML = s;

// fills the band between two lines, splitting a segment where they cross
function band(xs, a, b, colorUp, colorDown) {
  let out = "";
  for (let i = 0; i < xs.length - 1; i++) {
    const d0 = a[i] - b[i], d1 = a[i + 1] - b[i + 1];
    const piece = (x0, a0, b0, x1, a1, b1, c) =>
      `<polygon points="${x0},${a0} ${x1},${a1} ${x1},${b1} ${x0},${b0}" fill="${c}"/>`;
    if (d0 * d1 < 0) {
      const t = d0 / (d0 - d1), xm = xs[i] + t * (xs[i + 1] - xs[i]), ym = a[i] + t * (a[i + 1] - a[i]);
      out += piece(xs[i], a[i], b[i], xm, ym, ym, d0 < 0 ? colorUp : colorDown);
      out += piece(xm, ym, ym, xs[i + 1], a[i + 1], b[i + 1], d1 < 0 ? colorUp : colorDown);
    } else {
      out += piece(xs[i], a[i], b[i], xs[i + 1], a[i + 1], b[i + 1], (d0 + d1) < 0 ? colorUp : colorDown);
    }
  }
  return out;
}
const xs = [5].concat(candles.map((c, i) => xAt(i)));

// --- stochastic
const stochK = [503,512,520,520,516,519,519,521,521,522,520,523,534,536,539,539,540,529,523,526,539,544,546,539,532,524,524,524,529,530,539,539,536,524,509,496,493,498,500,494,486,488,487,492,492,492,487,483,484,488,499];
const stochD = [503,504,506,510,516,518,519,520,520,521,520,522,527,530,533,535,538,538,534,531,531,533,536,538,541,538,533,528,528,527,531,533,535,533,529,521,511,502,499,495,494,493,491,491,491,491,489,488,487,487,488];
s = frame(476, 554, "#fff", [480, 516], "#e2e2e2");
s += band(xs, stochK, stochD, "#a9aeda", "#f6cccc");
s += poly(xs.map((x, i) => [x, stochD[i]]), "#b08a8a", 1, 'stroke-dasharray="3 2"');
s += line(L, 494.5, R, 494.5, "#2e2e96", 1.2) + line(L, 536.5, R, 536.5, "#2e2e96", 1.2);
s += poly(xs.map((x, i) => [x, stochK[i]]), "#1a1a1a", 1.3);
s += border(475, 554);
s += line(R, 481.5, R + 4, 481.5, "#555") + text(1230, 486, "100", "#111", 11);
s += line(R, 516.5, R + 4, 516.5, "#555") + text(1230, 519, "50", "#111", 11);
s += line(R, 488.5, R + 4, 488.5, "#d88") + tag(1228, 481, 36, 12, "87,560", "#d46a6a");
s += line(R, 499.5, R + 4, 499.5, "#111") + tag(1228, 496, 36, 13, "73,135", "#111");
document.getElementById("stochPane").innerHTML = s;

// --- macd
const zero = 580.5;
const hist = [577,578,578,578,581,579,579,579,578,579,581,586,584,587,592,591,586,586,587,592,594,597,594,589,586,586,583,584,583,587,589,586,581,575,569,568,570,568,565,563,565,563,565,566,563,563,562,564,567,572];
const macd = [594,596,598,598,598,598,597,596,596,596,596,597,602,603,608,613,615,611,612,614,622,629,635,635,632,630,631,628,630,630,635,639,638,633,626,617,613,613,607,601,595,593,587,584,582,575,571,565,562,562,566];
const signal = [594,596,597,597,597,597,597,596,596,596,596,597,599,599,601,603,605,606,607,609,613,616,620,622,624,625,627,628,629,629,630,632,633,633,631,629,625,623,620,617,612,608,603,600,596,592,587,583,579,575,573];
s = frame(558, 643, "#fff", [603, 625], "#e2e2e2");
s += band(xs, macd, signal, "#bcecbc", "#f0b0b0");
hist.forEach((y, i) => {
  const x = Math.round(xAt(i)) - 9, up = y < zero, h = Math.abs(zero - y);
  if (h < 2) s += line(x, y + .5, x + 18, y + .5, up ? "#208a30" : "#7a2a9a");
  else s += `<rect x="${x + .5}" y="${Math.min(y, zero) + .5}" width="18" height="${h}" fill="url(#${up ? "greenBar" : "redBar"})" stroke="${up ? "#208a30" : "#a83444"}"/>`;
});
s += line(L, zero, R, zero, "#2e2e96", 1.2);
s += poly(xs.map((x, i) => [x, signal[i]]), "#c88878", 1.2);
s += poly(xs.map((x, i) => [x, macd[i]]), "#3a56c0", 1.3);
s += border(557, 643);
s += line(R, 565.5, R + 4, 565.5, "#3a56c0") + tag(1228, 560, 36, 12, "67,875", "#3a56c0");
s += line(R, 572.5, R + 4, 572.5, "#8a9a30") + tag(1228, 567, 36, 12, "26,886", "#6fb86f");
s += line(R, 603.5, R + 4, 603.5, "#555") + text(1230, 607, "-100", "#111", 11);
s += line(R, 625.5, R + 4, 625.5, "#555") + text(1230, 629, "-200", "#111", 11);
s += tag(1228, 573, 37, 14, "31,089", "#d46a6a");
document.getElementById("macdPane").innerHTML = s;

// --- volume
const volTop = [659,659,659,659,658,659,660,659,658,658,661,659,663,662,659,660,653,658,658,657,651,653,655,657,658,661,658,658,655,651,665,663,659,658,660,656,656,658,661,657,658,656,658,656,657,658,661,661,661,667];
const volCol = "rggrrgrrgrrrgrrggrrrrrggrrgrgrrggggrrgggrgrggrgrrr";
s = frame(648, 672, "#fff", [656], "#e2e2e2");
volTop.forEach((y, i) => {
  const x = Math.round(xAt(i)) - 9, up = volCol[i] === "g";
  s += `<rect x="${x + .5}" y="${y + .5}" width="18" height="${672 - y}" fill="url(#${up ? "greenBar" : "redBar"})" stroke="${up ? "#208a30" : "#a83444"}"/>`;
});
s += border(647, 672);
s += line(R, 654.5, R + 4, 654.5, "#555") + text(1230, 658, "1.000k", "#111", 11);
s += tag(1229, 659, 41, 12, "320.868", "#d46a6a");
document.getElementById("volPane").innerHTML = s;

// --- months
s = "";
months.forEach(x => s += line(x + .5, 672, x + .5, 675, "#aaa"));
[[42,"jun"],[136,"jul"],[255,"ago"],[351,"sep"],[447,"oct"],[565,"nov"],[662,"dic"],[876,"feb"],[971,"mar"],[1066,"abr"],[1185,"may"]].forEach(([x, m]) =>
  s += text(x, 689, m, "#111", 11, 'text-anchor="middle"'));
s += text(781, 690, "2019", "#111", 14, 'text-anchor="middle" font-weight="700"');
document.getElementById("datePane").innerHTML = s;
</script>
</body>
</html>
